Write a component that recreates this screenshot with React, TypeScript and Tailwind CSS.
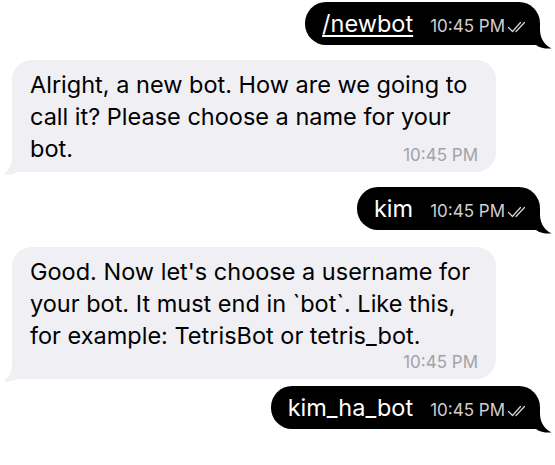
import React from 'react';

const font = "font-['Inter',sans-serif]";

function Checks() {
  return (
    <svg width="21" height="12" viewBox="0 0 21 12" fill="none" stroke="currentColor" strokeWidth="1.2" strokeLinecap="round" strokeLinejoin="round" className="ml-[2px] mt-[7px]">
      <path d="M1.5 6.5L5.5 10.5L13.5 1.5" />
      <path d="M9 10.5L17.5 1.5" />
    </svg>
  );
}

function TailRight() {
  return (
    <svg width="32" height="26" viewBox="0 0 32 26" className="absolute right-[-12px] bottom-[-4px]">
      <path d="M0 0H20V6C20 14 23 21 31.5 25.5C26 26 20 25 16 22H0Z" fill="#000" />
    </svg>
  );
}

function TailLeft() {
  return (
    <svg width="30" height="25" viewBox="0 0 30 25" className="absolute left-[-9px] bottom-[-3px]">
      <path d="M30 0H9V6C9 14 7 19 0.5 24.5C6 25 11 24 14 22H30Z" fill="#efeff4" />
    </svg>
  );
}

function Outgoing({ text, underline, className }: { text: string; underline?: boolean; className?: string }) {
  return (
    <div className={`self-end relative mr-[15px] ${className ?? ''}`}>
      <div className="relative z-10 bg-black rounded-[21px] h-[43px] flex items-center pl-[17px] pr-[12px]">
        <span className={`text-white text-[23.5px] ${underline ? 'underline underline-offset-[3px] decoration-[1.5px]' : ''}`}>{text}</span>
        <span className="ml-[17px] mt-[7px] text-[17px] text-[#cfcfd2]">10:45 PM</span>
        <span className="text-[#d8d8dc]">
          <Checks />
        </span>
      </div>
      <TailRight />
    </div>
  );
}

function Incoming({ text, className }: { text: string; className?: string }) {
  return (
    <div className={`self-start relative ml-[12px] w-[484px] ${className ?? ''}`}>
      <div className="relative z-10 flow-root bg-[#efeff4] rounded-[20px] pl-[18px] pr-[18px] pt-[9px] pb-[7px] text-[23.5px] leading-[32px] text-black">
        {text}
        <span className="float-right w-[84px] h-[20px]" />
        <span className="absolute right-[18px] bottom-[8px] leading-none text-[17px] text-[#a2a2a7]">10:45 PM</span>
      </div>
      <TailLeft />
    </div>
  );
}

export default function App() {
  return (
    <div className={`w-[555px] h-[465px] bg-white overflow-hidden flex flex-col pt-[2px] ${font}`}>
      <Outgoing text="/newbot" underline />
      <Incoming className="mt-[15px]" text="Alright, a new bot. How are we going to call it? Please choose a name for your bot." />
      <Outgoing className="mt-[15px]" text="kim" />
      <Incoming className="mt-[17px]" text="Good. Now let's choose a username for your bot. It must end in `bot`. Like this, for example: TetrisBot or tetris_bot." />
      <Outgoing className="mt-[7px]" text="kim_ha_bot" />
    </div>
  );
}
